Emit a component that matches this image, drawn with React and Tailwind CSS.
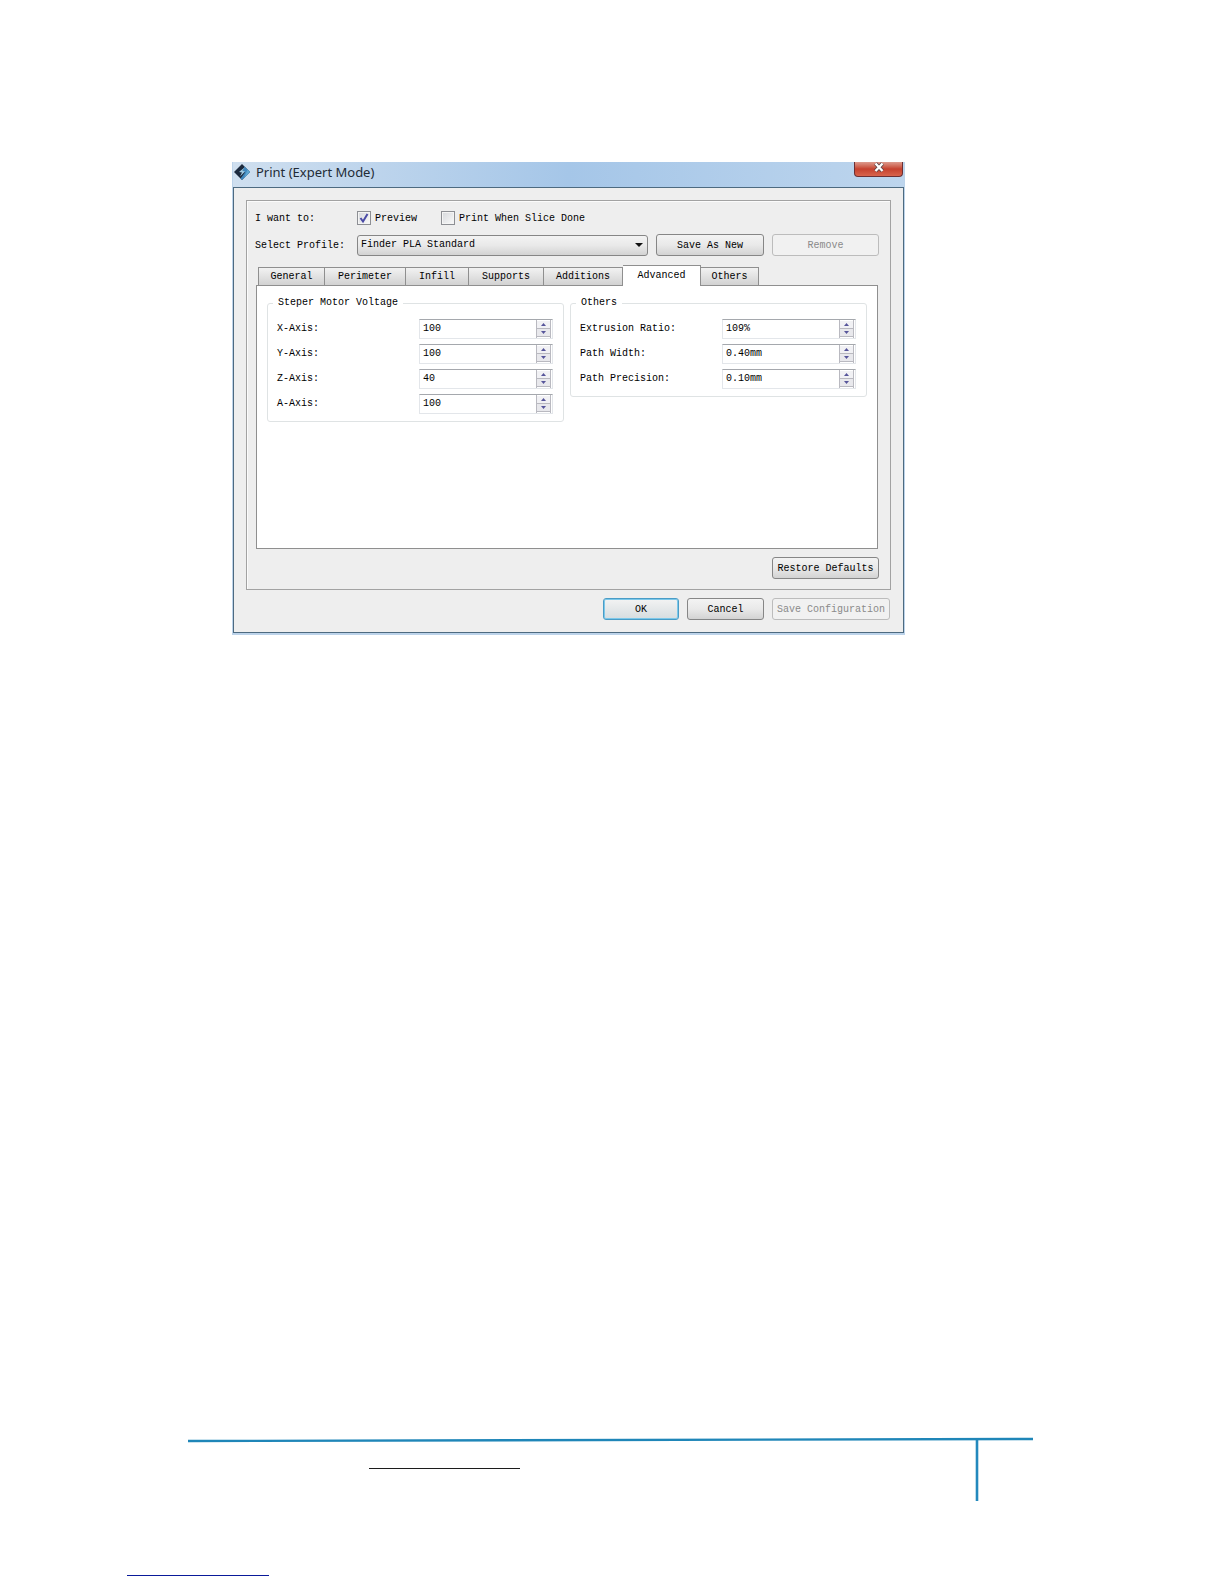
import { useState } from "react";

const tabs = [
  { name: "General", width: "w-[67px]" },
  { name: "Perimeter", width: "w-[81px]" },
  { name: "Infill", width: "w-[63px]" },
  { name: "Supports", width: "w-[75px]" },
  { name: "Additions", width: "w-[79px]" },
  { name: "Advanced", width: "w-[78px]" },
  { name: "Others", width: "w-[58px]" },
];

const motorFields = [
  { id: "x-axis", label: "X-Axis:", value: "100" },
  { id: "y-axis", label: "Y-Axis:", value: "100" },
  { id: "z-axis", label: "Z-Axis:", value: "40" },
  { id: "a-axis", label: "A-Axis:", value: "100" },
];

const otherFields = [
  { id: "extrusion-ratio", label: "Extrusion Ratio:", value: "109%" },
  { id: "path-width", label: "Path Width:", value: "0.40mm" },
  { id: "path-precision", label: "Path Precision:", value: "0.10mm" },
];

function Logo() {
  return (
    <svg viewBox="0 0 18 18" className="h-[18px] w-[18px] shrink-0">
      <path d="M9 1 L17 9 L9 17 L1 9 Z" fill="#1c2a3e" />
      <path d="M11.5 3.5 L17 9 L9 17 L7.5 15.5 L12 9.5 L9.5 8 Z" fill="#3f86bd" />
      <path d="M14.5 6.5 L17 9 L11 15 Z" fill="#5ea6d2" />
      <path d="M11.5 4.5 L6 9 L9 9.5 L7 13.5 L12 8.5 L9.5 7.8 Z" fill="#9fcbe4" />
    </svg>
  );
}

function Button({ children, className = "", disabled = false, primary = false }) {
  let look = "border-[#868686] bg-gradient-to-b from-[#f3f3f3] via-[#e9e9e9] to-[#d3d3d3] text-black";
  if (disabled) look = "border-[#bcbcbc] bg-[#f1f1f1] text-[#8a8a8a]";
  if (primary) look = "border-[#4a9cc6] bg-gradient-to-b from-[#f3f3f3] to-[#d6dde0] text-black ring-1 ring-inset ring-[#7cc8ea]";

  return (
    <button
      type="button"
      disabled={disabled}
      className={`flex h-[22px] shrink-0 items-center justify-center rounded-[3px] border pt-[2px] whitespace-nowrap ${look} ${className}`}
    >
      {children}
    </button>
  );
}

function SpinField({ id, label, value }) {
  const [text, setText] = useState(value);

  const step = (direction) => {
    const decimals = text.includes(".") ? 2 : 0;
    const unit = text.replace(/[\d.]/g, "");
    const next = parseFloat(text) + direction * (decimals ? 0.01 : 1);
    setText(next.toFixed(decimals) + unit);
  };

  return (
    <div className="flex items-center">
      <label htmlFor={id} className="w-[142px] shrink-0">
        {label}
      </label>
      <div className="flex h-5 min-w-0 flex-1 border border-[#e3e6ea] border-t-[#a5a8ad] bg-white">
        <input
          id={id}
          type="text"
          value={text}
          onChange={(e) => setText(e.target.value)}
          className="min-w-0 flex-1 bg-transparent pl-[3px] outline-none"
        />
        <div className="mr-px flex w-[15px] flex-col border-x border-[#b9b9c0] py-px">
          <button
            type="button"
            aria-label={`Increase ${label}`}
            onClick={() => step(1)}
            className="flex flex-1 items-center justify-center border-b border-[#b9b9c0] bg-[#f1f1f4]"
          >
            <svg viewBox="0 0 5 3" className="h-[3px] w-[5px]">
              <path d="M0 3 L2.5 0 L5 3 Z" fill="#56559a" />
            </svg>
          </button>
          <button
            type="button"
            aria-label={`Decrease ${label}`}
            onClick={() => step(-1)}
            className="flex flex-1 items-center justify-center border-b border-[#b9b9c0] bg-[#e8e8ec]"
          >
            <svg viewBox="0 0 5 3" className="h-[3px] w-[5px]">
              <path d="M0 0 L2.5 3 L5 0 Z" fill="#56559a" />
            </svg>
          </button>
        </div>
      </div>
    </div>
  );
}

function FieldGroup({ title, fields }) {
  return (
    <fieldset className="min-w-0 flex-1 rounded-[3px] border border-[#dfe3e4] pr-[10px] pb-[7px] pl-[9px]">
      <legend className="-ml-1 px-[5px] leading-3">{title}</legend>
      <div className="flex flex-col gap-[5px] pt-[10px]">
        {fields.map((field) => (
          <SpinField key={field.id} {...field} />
        ))}
      </div>
    </fieldset>
  );
}

function CheckOption({ id, label, checked, onChange }) {
  return (
    <div className="flex items-center gap-1">
      <span className="relative flex h-[14px] w-[14px]">
        <input
          id={id}
          type="checkbox"
          checked={checked}
          onChange={(e) => onChange(e.target.checked)}
          className="h-[14px] w-[14px] appearance-none border border-[#8d8f94] bg-gradient-to-br from-[#d6d8dc] to-[#fafafa] ring-1 ring-inset ring-[#f4f4f4]"
        />
        {checked && (
          <svg viewBox="0 0 14 14" className="pointer-events-none absolute inset-0">
            <path d="M3.5 7 L6 10.5 L10.5 3" fill="none" stroke="#4a4aa6" strokeWidth="2" />
          </svg>
        )}
      </span>
      <label htmlFor={id} className="pt-[2px]">
        {label}
      </label>
    </div>
  );
}

function PrintDialog() {
  const [preview, setPreview] = useState(true);
  const [printAfter, setPrintAfter] = useState(false);
  const [activeTab, setActiveTab] = useState("Advanced");

  return (
    <section className="bg-[#bcd3ea] px-px pb-[2px] font-['Liberation_Mono',monospace] text-[10px] leading-3 text-black">
      {/* Title bar */}
      <header className="flex h-[25px] items-start justify-between bg-gradient-to-r from-[#cfdfef] via-[#a5c6e8] to-[#bdd5ed]">
        <div className="flex items-center gap-1 pt-px">
          <Logo />
          <h1 className="pl-px font-['Noto_Sans',sans-serif] text-[13px] leading-4 text-[#222b36]">
            Print (Expert Mode)
          </h1>
        </div>
        <button
          type="button"
          aria-label="Close"
          className="mr-px flex h-[15px] w-[49px] items-start justify-center rounded-b-[4px] border border-t-0 border-[#6c2f33] bg-gradient-to-b from-[#dc9a8d] via-[#c5402e] to-[#d8644d]"
        >
          <svg viewBox="0 0 12 11" className="h-[11px] w-3">
            <path d="M2.5 1.5 L9.5 9 M9.5 1.5 L2.5 9" stroke="#5a4448" strokeWidth="4" />
            <path d="M2.5 1.5 L9.5 9 M9.5 1.5 L2.5 9" stroke="#ffffff" strokeWidth="2.4" />
          </svg>
        </button>
      </header>

      <div className="border border-[#4d6a80] bg-[#eeeeee] px-3 pt-3 pb-3">
        <div className="border border-[#a2a2a2] pt-[10px] pr-[11px] pb-[10px] pl-2 shadow-[inset_1px_1px_0_#fbfbfb]">
          <div className="flex items-center">
            <span className="w-[102px] shrink-0 pt-[2px]">I want to:</span>
            <div className="flex gap-6">
              <CheckOption id="preview" label="Preview" checked={preview} onChange={setPreview} />
              <CheckOption
                id="print-after"
                label="Print When Slice Done"
                checked={printAfter}
                onChange={setPrintAfter}
              />
            </div>
          </div>

          <div className="mt-[9px] flex items-center gap-2">
            <div className="flex min-w-0 flex-1 items-center">
              <label htmlFor="profile" className="w-[102px] shrink-0 pt-[2px]">
                Select Profile:
              </label>
              <div className="relative min-w-0 flex-1">
                <select
                  id="profile"
                  className="block h-[21px] w-full appearance-none rounded-[3px] border border-[#868686] bg-gradient-to-b from-[#f3f3f3] via-[#e9e9e9] to-[#d3d3d3] pl-[3px]"
                >
                  <option>Finder PLA Standard</option>
                </select>
                <svg viewBox="0 0 8 4" className="pointer-events-none absolute top-2 right-[5px] h-1 w-2">
                  <path d="M0 0 H8 L4 4 Z" fill="#111111" />
                </svg>
              </div>
            </div>
            <Button className="w-[108px]">Save As New</Button>
            <Button className="w-[107px]" disabled>
              Remove
            </Button>
          </div>

          {/* Tabs */}
          <div role="tablist" className="mt-[9px] flex h-5 items-end pl-[3px]">
            {tabs.map((tab) => (
              <button
                key={tab.name}
                type="button"
                role="tab"
                aria-selected={activeTab === tab.name}
                onClick={() => setActiveTab(tab.name)}
                className={`${tab.width} border-t border-r border-[#8f8f8f] first:border-l ${
                  activeTab === tab.name
                    ? "z-10 -mb-px h-[21px] bg-white"
                    : "h-[18px] bg-gradient-to-b from-[#f2f2f2] to-[#d2d2d2] pt-px"
                }`}
              >
                {tab.name}
              </button>
            ))}
          </div>
          <div
            role="tabpanel"
            className="mr-px ml-px flex min-h-[264px] items-start gap-[6px] border border-[#8f8f8f] bg-white px-[10px] pt-[11px] pb-4"
          >
            <FieldGroup title="Steper Motor Voltage" fields={motorFields} />
            <FieldGroup title="Others" fields={otherFields} />
          </div>

          <div className="mt-2 flex justify-end">
            <Button className="w-[107px]">Restore Defaults</Button>
          </div>
        </div>

        <div className="mt-2 flex justify-end gap-2 pr-px">
          <Button className="w-[76px]" primary>
            OK
          </Button>
          <Button className="w-[77px]">Cancel</Button>
          <Button className="w-[118px]" disabled>
            Save Configuration
          </Button>
        </div>
      </div>
    </section>
  );
}

export default function App() {
  return (
    <div className="flex min-h-screen flex-col bg-white">
      <main className="pt-[162px] pr-[319px] pl-[232px]">
        <PrintDialog />
      </main>

      {/* Page footer rules */}
      <footer className="mt-auto">
        <div className="pr-[191px] pl-[188px]">
          <svg viewBox="0 0 845 64" className="block w-full">
            <path d="M0 4 L845 2" stroke="#1f86b8" strokeWidth="2.4" />
            <path d="M789 3 V64" stroke="#2389bd" strokeWidth="2.6" />
          </svg>
        </div>
        <hr className="-mt-[33px] ml-[369px] w-[151px] border-t border-[#1c1c1c]" />
        <hr className="mt-[106px] mb-2 ml-[127px] w-[142px] border-t border-[#0a1a9a]" />
      </footer>
    </div>
  );
}
